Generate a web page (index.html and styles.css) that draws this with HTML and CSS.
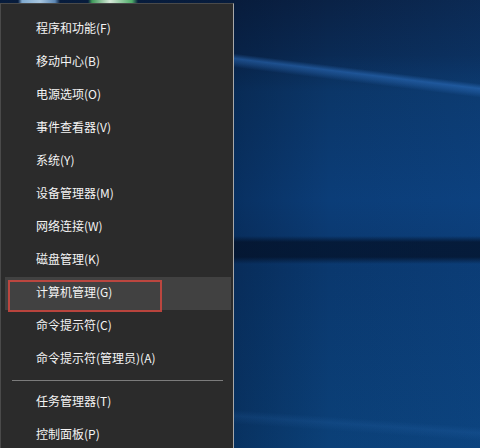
FILE: index.html
```html
<!DOCTYPE html>
<html lang="zh-CN">
<head>
<meta charset="utf-8">
<title>Win+X 菜单</title>
<link rel="stylesheet" href="styles.css">
</head>
<body>
<div class="desktop">
  <ul class="menu">
    <li class="item">程序和功能(F)</li>
    <li class="item">移动中心(B)</li>
    <li class="item">电源选项(O)</li>
    <li class="item">事件查看器(V)</li>
    <li class="item">系统(Y)</li>
    <li class="item">设备管理器(M)</li>
    <li class="item">网络连接(W)</li>
    <li class="item">磁盘管理(K)</li>
    <li class="item item-active">计算机管理(G)</li>
    <li class="item">命令提示符(C)</li>
    <li class="item">命令提示符(管理员)(A)</li>
    <li class="sep"></li>
    <li class="item">任务管理器(T)</li>
    <li class="item">控制面板(P)</li>
  </ul>
</div>
</body>
</html>
```
FILE: styles.css
```css
html, body {
  margin: 0;
  padding: 0;
  background: #0a2a55;
}

.desktop {
  width: 480px;
  height: 448px;
  box-sizing: border-box;
  padding-top: 3px;
  display: flex;
  align-items: stretch;
  overflow: hidden;
  background:
    linear-gradient(to right, transparent 18px, #7fa9cf 22px, #a9c7e0 40px, #5b86b3 55px, transparent 60px, transparent 88px, #3f9a5a 92px, #d7e8d9 110px, #4fae6a 132px, transparent 138px) 0 0 / 240px 3px no-repeat,
    linear-gradient(187deg, transparent 83px, rgba(50, 120, 205, 0.5) 88px, rgba(50, 120, 205, 0.3) 92px, transparent 97px),
    linear-gradient(180deg, transparent 236px, rgba(3, 16, 38, 0.75) 242px, rgba(3, 16, 38, 0.75) 257px, transparent 264px),
    linear-gradient(184deg, transparent 426px, rgba(60, 130, 210, 0.12) 432px, transparent 440px),
    linear-gradient(to right, rgba(0, 10, 30, 0.25) 235px, transparent 330px, rgba(20, 90, 170, 0.14) 480px),
    linear-gradient(to bottom, #0a2246 0, #0a2a54 55px, #0b3668 92px, #0b3d78 200px, #0b3a72 236px, #0a386e 270px, #0b4078 448px);
}

.menu {
  list-style: none;
  margin: 0;
  padding: 9px 0 0 0;
  width: 234px;
  box-sizing: border-box;
  background: #2b2b2b;
  border-top: 1px solid #4a4a4a;
  border-left: 1px solid #4a4a4a;
  border-right: 1px solid #a8a8a8;
  font-family: "Noto Sans CJK SC", "Noto Sans", sans-serif;
  font-size: 12px;
  color: #f4f4f4;
}

.item {
  height: 33px;
  line-height: 29px;
  padding-left: 35px;
  white-space: nowrap;
}

.item-active {
  position: relative;
  background: #414141;
  margin: 0 2px 0 4px;
  padding-left: 31px;
}

.item-active::after {
  content: "";
  position: absolute;
  left: 3px;
  top: 3px;
  width: 150px;
  height: 28px;
  border: 2px solid #c9473f;
  opacity: 0.9;
}

.sep {
  height: 10px;
  margin: 0 10px 0 11px;
  background: linear-gradient(to bottom, transparent 4px, #7c7c7c 4px, #7c7c7c 5px, transparent 5px);
}
```
